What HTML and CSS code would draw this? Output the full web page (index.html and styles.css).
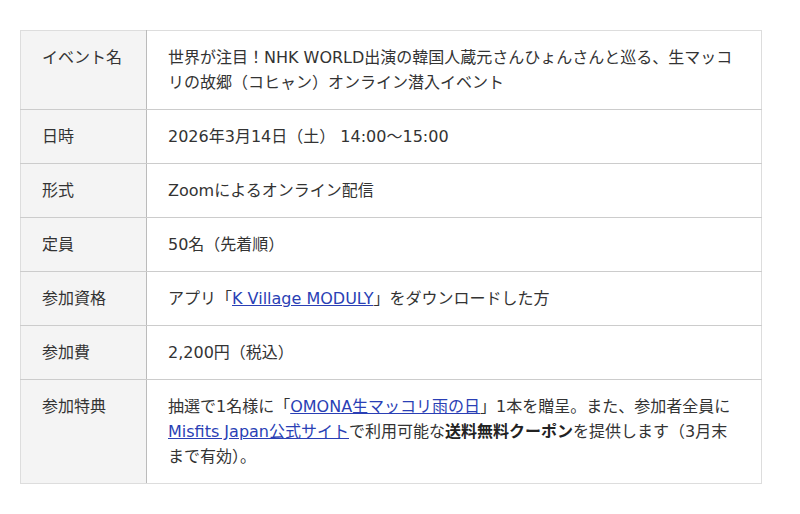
FILE: index.html
```html
<!DOCTYPE html>
<html lang="ja">
<head>
<meta charset="utf-8">
<link rel="stylesheet" href="styles.css">
</head>
<body>
<table class="info">
  <tr><th>イベント名</th><td>世界が注目！NHK WORLD出演の韓国人蔵元さんひょんさんと巡る、生マッコリの故郷（コヒャン）オンライン潜入イベント</td></tr>
  <tr><th>日時</th><td>2026年3月14日（土） 14:00〜15:00</td></tr>
  <tr><th>形式</th><td>Zoomによるオンライン配信</td></tr>
  <tr><th>定員</th><td>50名（先着順）</td></tr>
  <tr><th>参加資格</th><td>アプリ「<a href="#">K Village MODULY</a>」をダウンロードした方</td></tr>
  <tr><th>参加費</th><td>2,200円（税込）</td></tr>
  <tr><th>参加特典</th><td>抽選で1名様に「<a href="#">OMONA生マッコリ雨の日</a>」1本を贈呈。また、参加者全員に<a href="#">Misfits Japan公式サイト</a>で利用可能な<strong>送料無料クーポン</strong>を提供します（3月末まで有効）。</td></tr>
</table>
</body>
</html>
```
FILE: styles.css
```css
html, body { margin: 0; padding: 0; background: #fff; }
body {
  font-family: "DejaVu Sans", "Noto Sans CJK JP", sans-serif;
  font-size: 16px;
  line-height: 25px;
  color: #333;
  padding: 30px 0 0 20px;
}
.info {
  width: 742px;
  border-collapse: collapse;
  border: 1px solid #ddd;
}
.info th, .info td {
  padding: 14px 21px;
  text-align: left;
  vertical-align: top;
  border-bottom: 1px solid #ccc;
}
.info tr:last-child th, .info tr:last-child td { border-bottom: 1px solid #ddd; }
.info th {
  width: 83px;
  font-weight: normal;
  background: #f4f4f4;
  border-right: 1px solid #bbb;
}
.info a { color: #2a3fb5; text-decoration: underline; }
.info strong { font-weight: bold; color: #222; }
```
